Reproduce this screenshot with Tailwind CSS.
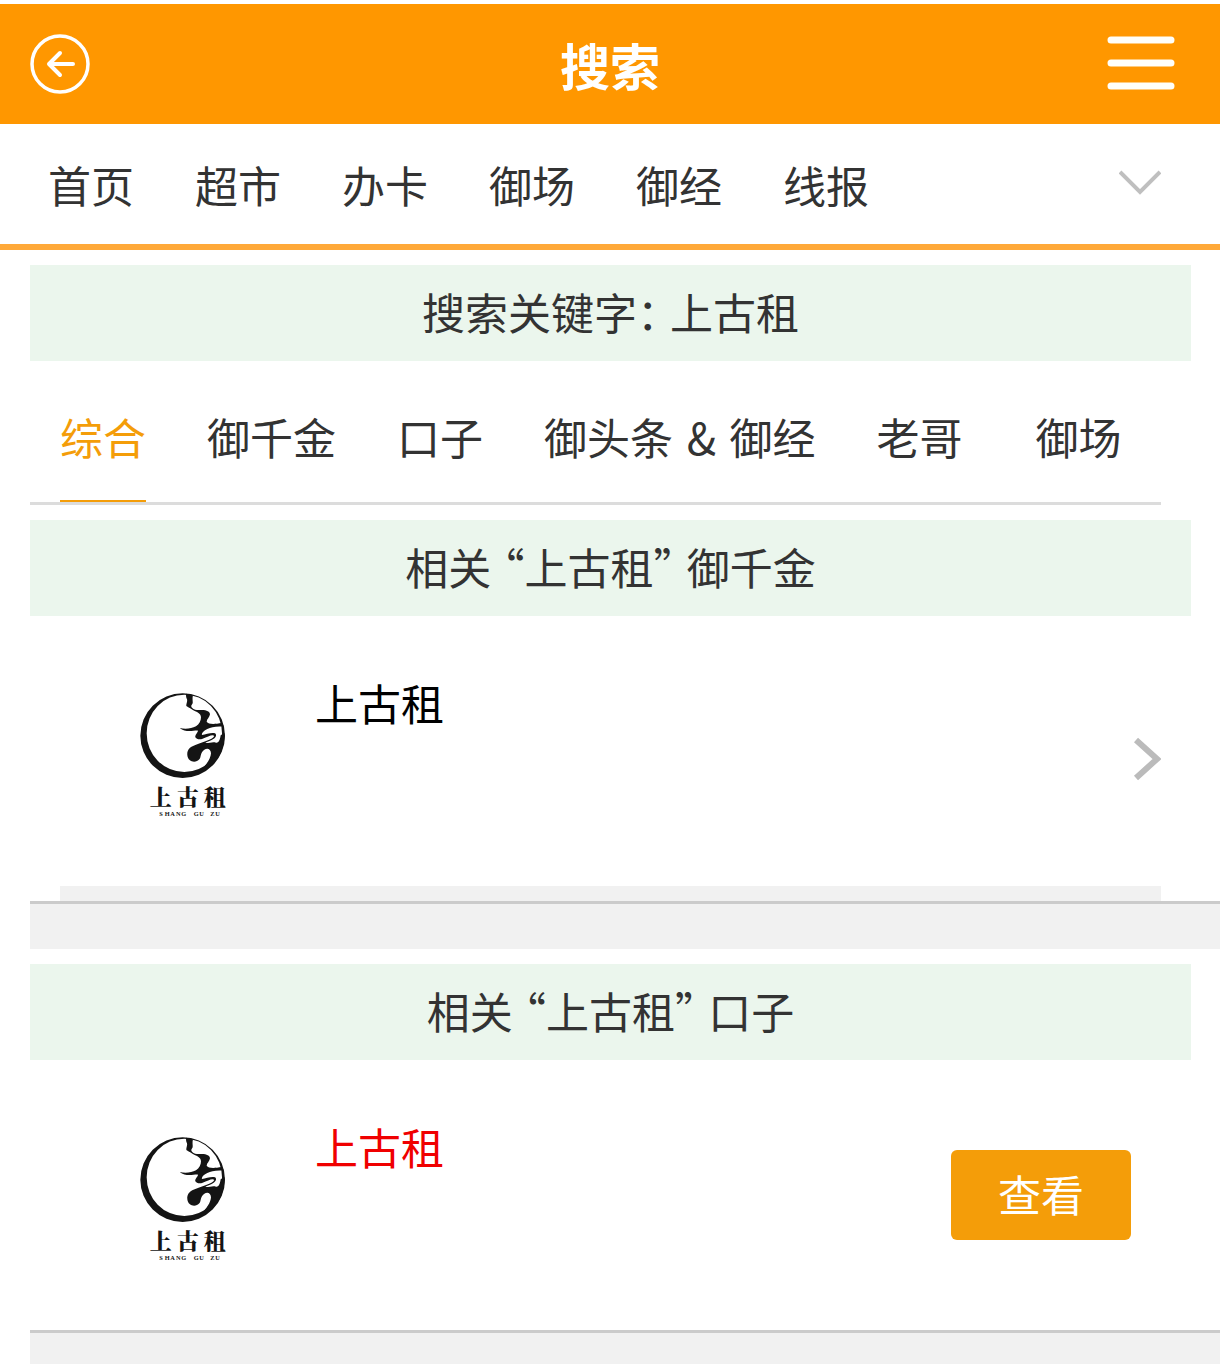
<!DOCTYPE html>
<html lang="zh-CN">
<head>
<meta charset="utf-8">
<meta name="viewport" content="width=device-width, initial-scale=1">
<title>搜索</title>
<script src="https://cdn.jsdelivr.net/npm/@tailwindcss/browser@4"></script>
</head>
<body class="bg-white font-['Noto_Sans_CJK_SC',sans-serif] text-[43px] leading-[60px] text-[#333] overflow-x-hidden">

<!-- Logo artwork shared by both result rows -->
<svg class="hidden" aria-hidden="true">
  <symbol id="logo" viewBox="0 0 330 435">
    <path fill="#141414" fill-rule="evenodd" d="M158 40a127 127 0 1 0 0 254a127 127 0 1 0 0-254ZM163 44a113 116 0 1 1 0 232a113 116 0 1 1 0-232Z"/>
    <path fill="#141414" d="M168 41L189 46C186 56 189 64 188 70C184 77 182 78 186 83C194 92 206 90 216 90C230 90 240 95 240 103C239 112 230 118 230 125C236 133 250 133 276 129L282 140C258 138 244 141 232 147C220 153 214 160 216 165C228 163 246 156 255 160C261 164 258 172 250 177C242 183 230 185 226 189C238 190 248 184 258 188C266 190 270 180 272 166L284 160C284 206 266 234 250 250C238 260 226 266 212 270C230 254 242 236 243 220C242 206 232 203 222 210C210 219 214 232 208 238C198 250 174 247 172 226C170 208 182 199 198 194C218 186 246 180 253 168C248 161 234 170 218 176C210 180 199 178 196 172C194 164 204 158 204 152C194 150 168 160 149 144C166 149 184 146 198 139C208 133 213 122 213 112C213 102 204 97 194 93C184 88 180 84 169 78C168 71 173 64 171 58C168 52 168 48 168 41Z"/>
    <g fill="#141414" font-family="'Noto Serif CJK SC','Noto Sans CJK SC',sans-serif" font-weight="900" font-size="66"><text x="59 140 221" y="376">上古租</text></g>
    <g fill="#141414" font-family="'Liberation Serif',serif" font-weight="700" font-size="19"><text x="88 104 121 138 154" y="407">SHANG</text><text x="191 208" y="407">GU</text><text x="241 256" y="407">ZU</text></g>
  </symbol>
</svg>

<header class="mt-1 grid h-[120px] grid-cols-[1fr_auto_1fr] items-center bg-[#ff9700] px-[30px] text-white">
  <a href="#" aria-label="返回" class="justify-self-start">
    <svg class="size-[60px]" viewBox="0 0 60 60" fill="none" stroke="currentColor" stroke-width="4" stroke-linecap="round" stroke-linejoin="round"><circle cx="30" cy="30" r="28" stroke-width="3.5"/><path d="M43 30H19M30 19L19 30L30 41"/></svg>
  </a>
  <h1 class="text-[50px] font-bold">搜索</h1>
  <button type="button" aria-label="菜单" class="mr-[15px] justify-self-end">
    <svg class="h-[56px] w-[68px]" viewBox="0 0 68 56" stroke="#fffffa" stroke-width="7" stroke-linecap="round"><path d="M4 4H64M4 27H64M4 50H64"/></svg>
  </button>
</header>

<nav class="flex h-[126px] items-center justify-between border-b-6 border-[#ffa939] pr-[59px] pl-12">
  <div class="flex gap-[61px]">
    <a href="#">首页</a><a href="#">超市</a><a href="#">办卡</a><a href="#">御场</a><a href="#">御经</a><a href="#">线报</a>
  </div>
  <button type="button" aria-label="展开">
    <svg class="h-[30px] w-[42px]" viewBox="0 0 42 30" fill="none" stroke="#bfbfbf" stroke-width="4"><path d="M1 3L21 23L41 3"/></svg>
  </button>
</nav>

<main class="pl-[30px] pt-[15px]">
  <h2 class="mr-[29px] bg-[#ebf6ed] pt-4 pb-5 text-center [font-feature-settings:'halt']">搜索关键字： <span class="ml-0.5">上古租</span></h2>

  <nav class="mr-[59px] flex h-36 items-end gap-[61px] border-b-3 border-[#dcdcdc] pl-[30px] whitespace-nowrap">
    <a href="#" class="border-b-2 border-[#f49d09] pb-[34px] text-[#f49d09]">综合</a>
    <a href="#" class="pb-9">御千金</a>
    <a href="#" class="pb-9">口子</a>
    <a href="#" class="pb-9">御头条 <span class="mx-1">&amp;</span> 御经</a>
    <a href="#" class="pb-9">老哥</a>
    <a href="#" class="ml-3 pb-9">御场</a>
  </nav>

  <section class="pt-[15px]">
    <h2 class="mr-[29px] bg-[#ebf6ed] pt-4 pb-5 text-center [font-feature-settings:'halt']">相关 <span class="mx-0.5">“上古租”</span> 御千金</h2>
    <a href="#" class="mr-[59px] ml-[30px] flex h-[285px] items-start border-b-15 border-[#f1f1f1] pt-16 pl-[70px] text-black">
      <svg class="h-[145px] w-[110px] shrink-0" role="img" aria-label="上古租"><use href="#logo"/></svg>
      <span class="ml-[75px] flex-1 leading-11">上古租</span>
      <svg class="mt-14 h-[46px] w-[28px]" viewBox="0 0 28 46" fill="none" stroke="#bbb" stroke-width="6"><path d="M3 4L24 23L3 42"/></svg>
    </a>
    <div class="h-12 border-t-3 border-[#cbcbcb] bg-[#f1f1f1]"></div>
  </section>

  <section class="pt-[15px]">
    <h2 class="mr-[29px] bg-[#ebf6ed] pt-4 pb-5 text-center [font-feature-settings:'halt']">相关 <span class="mx-0.5">“上古租”</span> 口子</h2>
    <div class="mr-[89px] ml-[30px] flex h-[270px] items-start pt-16 pl-[70px]">
      <svg class="h-[145px] w-[110px] shrink-0" role="img" aria-label="上古租"><use href="#logo"/></svg>
      <a href="#" class="ml-[75px] flex-1 leading-11 text-[#f00000]">上古租</a>
      <button type="button" class="mt-[26px] h-[90px] w-[180px] rounded-md bg-[#f49d09] pb-1 text-white">查看</button>
    </div>
    <div class="h-[34px] border-t-3 border-[#cbcbcb] bg-[#f1f1f1]"></div>
  </section>
</main>
</body>
</html>
